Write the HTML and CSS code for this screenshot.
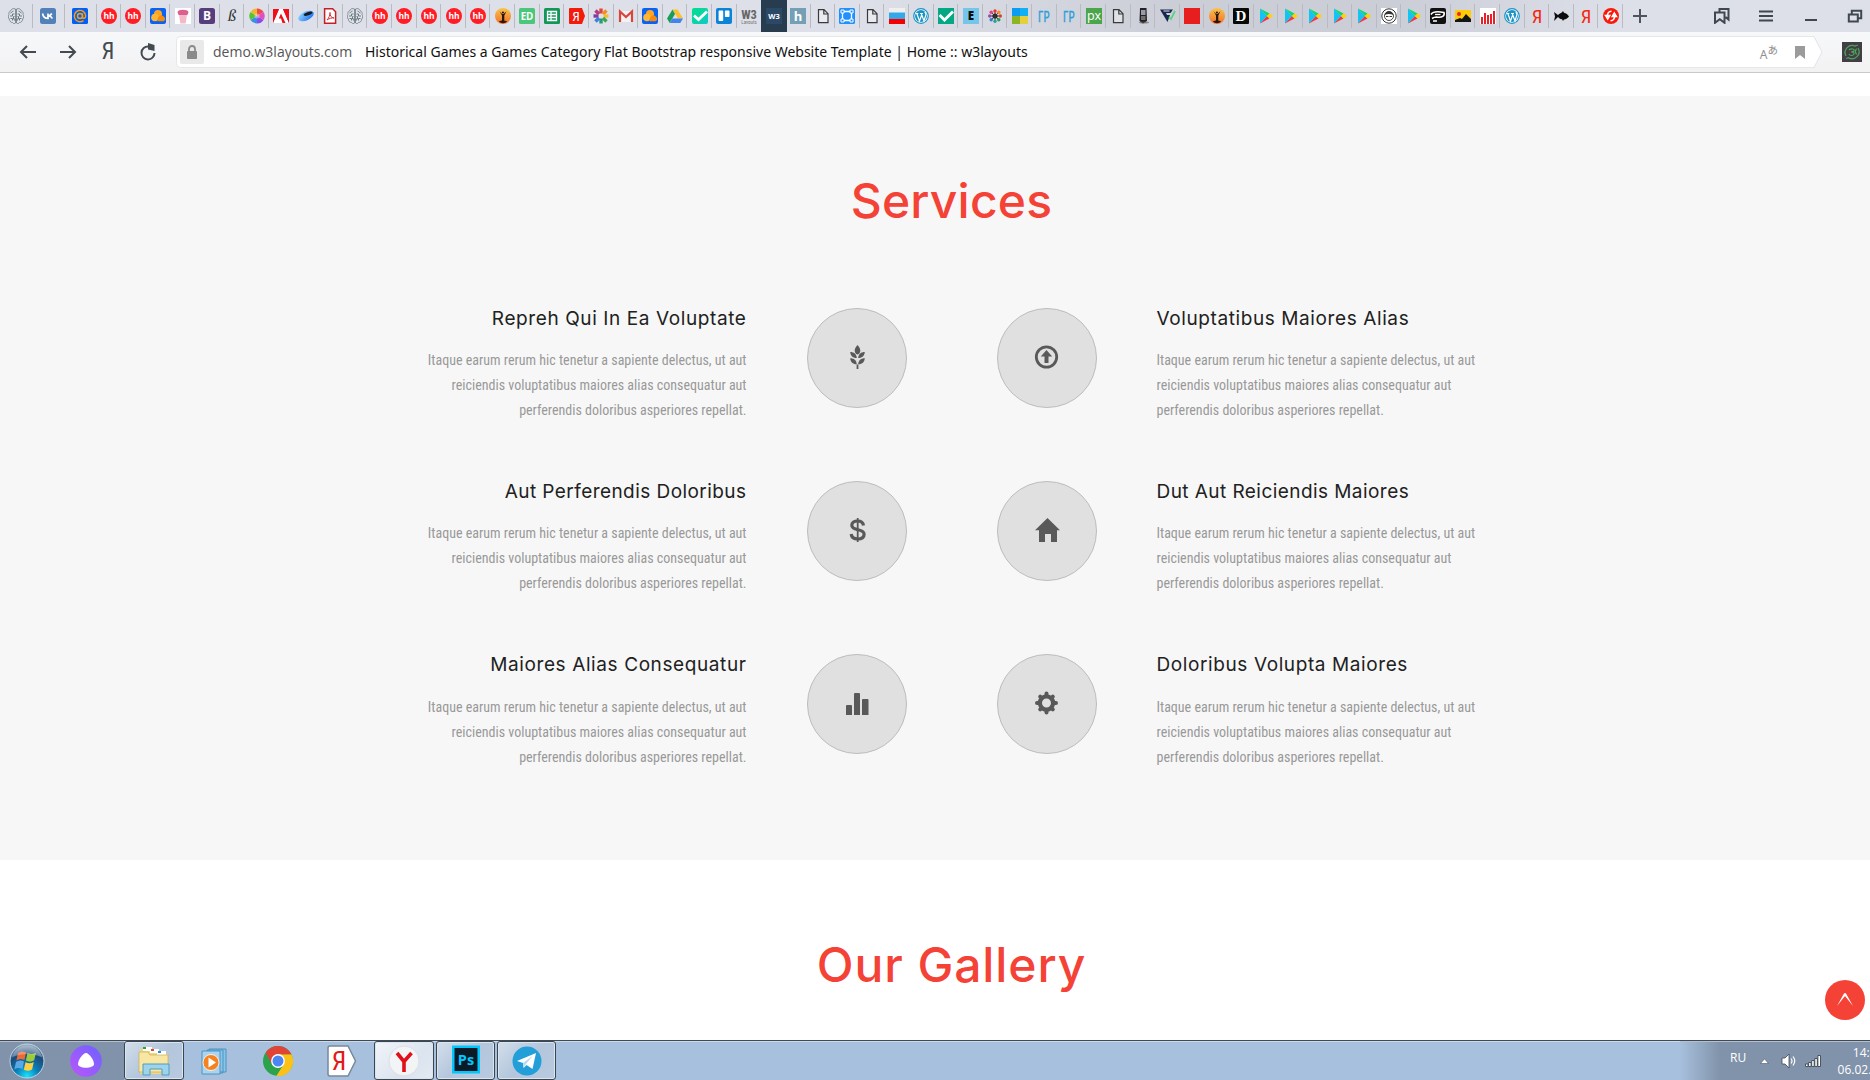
FILE: index.html
```html
<!DOCTYPE html>
<html lang="en">
<head>
<meta charset="utf-8">
<title>Historical Games a Games Category Flat Bootstrap responsive Website Template | Home :: w3layouts</title>
<link rel="stylesheet" href="styles.css">
</head>
<body>
<svg class="defs" aria-hidden="true">
  <defs>
    <linearGradient id="g-sun" x1="0" y1="0" x2="0" y2="1"><stop offset="0" stop-color="#f9c54a"/><stop offset="1" stop-color="#f0702c"/></linearGradient>
    <linearGradient id="g-check" x1="0" y1="0" x2="1" y2="1"><stop offset="0" stop-color="#00e08a"/><stop offset="1" stop-color="#12c8c8"/></linearGradient>
    <linearGradient id="g-disk" x1="0" y1="0" x2="1" y2="1"><stop offset="0" stop-color="#9fdcff"/><stop offset="1" stop-color="#0b67f0"/></linearGradient>
    <linearGradient id="g-alice" x1="1" y1="0" x2="0" y2="1"><stop offset="0" stop-color="#6a63ff"/><stop offset="1" stop-color="#bd55fb"/></linearGradient>
    <radialGradient id="g-orb" cx=".5" cy=".95" r=".95"><stop offset="0" stop-color="#19e4ff"/><stop offset=".35" stop-color="#0b7fb8"/><stop offset=".7" stop-color="#1b4a7a"/><stop offset="1" stop-color="#9fb4c8"/></radialGradient>
  </defs>
</svg>
<svg class="symbols" aria-hidden="true">
  <symbol id="brain" viewBox="0 0 16 16"><path d="M7.500 1C5 0 3.500 1 3 2.500 1 3.500.5 5 1 6.500 0 8 0 10 1.300 11 1.500 13.500 3 14.500 4.500 14.500 5.500 16 7 15.800 7.500 15zM8.500 1C11 0 12.500 1 13 2.500c2 1 2.500 2.500 2 4 1 1.500 1 3.500-.3 4.500-.2 2.500-1.700 3.500-3.200 3.500-1 1.500-2.500 1.300-3 .5z" fill="#dfe4e8" stroke="#6c7983" stroke-width=".8"/><path d="M2.500 5c2 0 1-2 3-2M2 8h2.500V6h2M2.500 10.500h2v2M6.500 8.500H5.500v2.500h1.500v2M13.500 5c-2 0-1-2-3-2M14 8h-2.500V6h-2M13.500 10.500h-2v2M9.500 8.500h1v2.500H9v2" fill="none" stroke="#6c7983"/></symbol>
  <symbol id="vk" viewBox="0 0 16 16"><rect width="16" height="16" rx="2.500" fill="#5181b8"/><path d="M2.500 5.500c.6 3.200 2.300 5 5.500 5v-5M8 8c2 0 3-1 3.800-2.500M8.300 8c2 0 3.300 1 4 2.500" fill="none" stroke="#fff" stroke-width="1.700"/></symbol>
  <symbol id="at" viewBox="0 0 16 16"><rect width="16" height="16" rx="1.500" fill="#005ff9"/><circle cx="8" cy="8" r="2.500" fill="none" stroke="#ff9e00" stroke-width="1.500"/><path d="M10.500 5.500v3.500c0 2 3.200 1.700 3.200-1A5.700 5.700 0 1 0 11.500 12.600" fill="none" stroke="#ff9e00" stroke-width="1.400"/></symbol>
  <symbol id="hh" viewBox="0 0 16 16"><circle cx="8" cy="8" r="8" fill="#ff1c24"/><text x="8" y="11" text-anchor="middle" class="ic b" font-size="8.500" fill="#fff">hh</text></symbol>
  <symbol id="cloud" viewBox="0 0 16 16"><rect width="16" height="16" rx="2" fill="#0a62f5"/><circle cx="8" cy="6" r="4" fill="#ffa51f"/><circle cx="5" cy="9.500" r="3.800" fill="#ffb733"/><path d="M8 13.300c-2-3 3-8 6-4.500 2 2 1 4.500-1 4.500z" fill="#f58a0b"/></symbol>
  <symbol id="cup" viewBox="0 0 16 16"><path fill="#fff" d="M0 0h16v16H0z"/><path d="M4 6h8l-1.300 9.500H5.300z" fill="#f3b9c9"/><path d="M2.500 4C3 1 13 1 13.500 4l-1 3h-9z" fill="#dd5f8c"/></symbol>
  <symbol id="bs" viewBox="0 0 16 16"><rect width="16" height="16" rx="2.500" fill="#563d7c"/><text x="8" y="12.200" text-anchor="middle" class="ic b" font-size="12" fill="#fff">B</text></symbol>
  <symbol id="beta" viewBox="0 0 16 16"><text x="8" y="13" text-anchor="middle" class="serif" font-size="17" fill="#333">ß</text></symbol>
  <symbol id="wheel" viewBox="0 0 16 16"><path d="M8 8V.5A7.500 7.500 0 0 1 14.500 4z" fill="#f04a4a"/><path d="M8 8l6.500-4a7.500 7.500 0 0 1 0 8z" fill="#e44fc0"/><path d="M8 8l6.500 4A7.500 7.500 0 0 1 8 15.500z" fill="#8a4be8"/><path d="M8 8v7.500A7.500 7.500 0 0 1 1.500 12z" fill="#3a8ee8"/><path d="M8 8l-6.500 4a7.500 7.500 0 0 1 0-8z" fill="#56c23a"/><path d="M8 8L1.500 4A7.500 7.500 0 0 1 8 .5z" fill="#f2b52c"/><circle cx="8" cy="8" r="2.500" fill="#fff" opacity=".35"/></symbol>
  <symbol id="adobe" viewBox="0 0 16 16"><path d="M0 1h16v14H0z" fill="#f00e18"/><path d="M0 15L6 1h4l6 14h-3.500L8 5.500 5.800 10.500H8L9.500 15z" fill="#fff"/><path d="M6 1H0v14zM10 1h6v14z" fill="#f00e18"/></symbol>
  <symbol id="disk" viewBox="0 0 16 16"><ellipse cx="8" cy="8" rx="8.300" ry="4.400" transform="rotate(-25 8 8)" fill="url(#g-disk)"/><ellipse cx="10" cy="5.700" rx="4.600" ry="1.600" transform="rotate(-18 10 5.700)" fill="#161b26"/></symbol>
  <symbol id="pdf" viewBox="0 0 16 16"><path d="M2.600.8h8l3 3v11.400h-11z" fill="#fff" stroke="#c61f26" stroke-width="1.500"/><path d="M5 12c2-2 3-5 3-7.500C8 8 9 9.500 12 10c-2-.5-5 .5-7 2z" fill="none" stroke="#d5343a"/></symbol>
  <symbol id="sunset" viewBox="0 0 16 16"><circle cx="8" cy="8" r="8" fill="url(#g-sun)"/><path d="M4.500 3.200L7 6h1.500l3-2.800L9.300 7.500V13H7V7.500zM4 13.500c2-1.200 6-1.200 8 0-2 2.200-6 2.200-8 0z" fill="#2d1508"/><circle cx="7.900" cy="4.500" r="1.100" fill="#2d1508"/></symbol>
  <symbol id="ed" viewBox="0 0 16 16"><rect width="16" height="16" rx="1.500" fill="#4cc77a"/><text x="8" y="11.800" text-anchor="middle" class="ic b" font-size="9.800" fill="#fff">ED</text></symbol>
  <symbol id="sheets" viewBox="0 0 16 16"><rect width="16" height="16" rx="1.500" fill="#12965a"/><path d="M3.500 3.500h9v9h-9zM3.500 6.500h9M3.500 9.500h9M7 3.500v9" fill="none" stroke="#fff" stroke-width="1.300"/></symbol>
  <symbol id="yared" viewBox="0 0 16 16"><path d="M1 0h12l3 8-3 8H1a1 1 0 0 1-1-1V1a1 1 0 0 1 1-1z" fill="#f31b0c"/><text x="7" y="13" text-anchor="middle" class="cond" font-size="13.500" fill="#fff">Я</text></symbol>
  <symbol id="photos" viewBox="0 0 16 16"><g stroke-width="3.400" fill="none"><path d="M8 .5v5" stroke="#e0443e"/><path d="M13.500 2.500l-3.500 3.500" stroke="#f28b30"/><path d="M15.500 8h-5" stroke="#f5bf2a"/><path d="M13.500 13.500l-3.500-3.500" stroke="#3aa757"/><path d="M8 15.500v-5" stroke="#289a75"/><path d="M2.500 13.500l3.500-3.500" stroke="#3b7de0"/><path d="M.5 8h5" stroke="#7b3fa0"/><path d="M2.500 2.500l3.500 3.500" stroke="#b43a78"/></g></symbol>
  <symbol id="gmail" viewBox="0 0 16 16"><path d="M1 3h14v11H1z" fill="#f2f2f2"/><path d="M2 14V3.500l6 5.500 6-5.500V14" fill="none" stroke="#d9453b" stroke-width="2.200"/></symbol>
  <symbol id="drive" viewBox="0 0 16 16"><path d="M5.500 1.500h5L16 10.500h-5z" fill="#fbc02d"/><path d="M5.500 1.500L8 6 2.700 15 0 10.500z" fill="#1a9d57"/><path d="M5.400 10.500H16L13.300 15H2.700z" fill="#4383f0"/></symbol>
  <symbol id="check" viewBox="0 0 16 16"><rect width="16" height="16" rx="2" fill="url(#g-check)"/><path d="M2 7.500l4.500 4L15 3.500" fill="none" stroke="#fff" stroke-width="2.800"/></symbol>
  <symbol id="check2" viewBox="0 0 16 16"><path fill="#04a984" d="M0 0h16v16H0z"/><path d="M1.500 7l5 5L15 3.500" fill="none" stroke="#fff" stroke-width="2.800"/></symbol>
  <symbol id="trello" viewBox="0 0 16 16"><rect width="16" height="16" rx="2" fill="#0b84d8"/><rect x="2.600" y="2.600" width="4.600" height="10.400" rx=".8" fill="#fff"/><rect x="8.900" y="2.600" width="4.600" height="6.500" rx=".8" fill="#fff"/></symbol>
  <symbol id="w3" viewBox="0 0 16 16"><text x="8" y="10.500" text-anchor="middle" class="cond b" font-size="12.500" fill="#666">W3</text><text x="8" y="15.500" text-anchor="middle" class="cond" font-size="5" fill="#777">Layouts</text></symbol>
  <symbol id="w3a" viewBox="0 0 16 16"><path fill="#2c4867" d="M0 0h16v16H0z"/><text x="8" y="11" text-anchor="middle" class="ic b" font-size="7.500" fill="#fff">W3</text></symbol>
  <symbol id="h" viewBox="0 0 16 16"><path fill="#73a0b5" d="M0 0h16v16H0z"/><text x="8" y="13" text-anchor="middle" class="ic b" font-size="13" fill="#fff">h</text></symbol>
  <symbol id="doc" viewBox="0 0 16 16"><path d="M3.500 1.700h5.500l4 4v9H3.500zM8.800 1.700V6H13" fill="#fff" fill-opacity=".35" stroke="#3a3a3a" stroke-width="1.200"/></symbol>
  <symbol id="frame" viewBox="0 0 16 16"><rect width="16" height="16" rx="1.500" fill="#1e90ff"/><path d="M3.500 3.500h9v9h-9z" fill="none" stroke="#fff" stroke-width="1.300"/><path d="M2 2h3v3H2zM11 2h3v3h-3zM2 11h3v3H2zM11 11h3v3h-3z" fill="#1e90ff" stroke="#fff"/></symbol>
  <symbol id="flag" viewBox="0 0 16 16"><path fill="#efefef" d="M0 0h16v5.300H0z"/><path fill="#35a8e8" d="M0 4.500h16v6.500H0z"/><path fill="#f40000" d="M0 11h16v5H0z"/></symbol>
  <symbol id="wp" viewBox="0 0 16 16"><circle cx="8" cy="8" r="7.300" fill="#fff" stroke="#1b93c5" stroke-width="1.200"/><circle cx="8" cy="8" r="6" fill="#1b93c5"/><path d="M2.500 5.500h2.800M7 5.500h3M3.800 5.500l2.700 7.500 2-5.500M8.200 5.500l2.800 7.500L13 6.500c0-1-1-1.500-1-2.800" fill="none" stroke="#fff" stroke-width="1.200"/></symbol>
  <symbol id="e" viewBox="0 0 16 16"><path fill="#73c5ea" d="M0 0h16v16H0z"/><text x="8" y="12.200" text-anchor="middle" class="ic bb" font-size="11.500" fill="#0c0c0c">E</text></symbol>
  <symbol id="flower" viewBox="0 0 16 16"><circle cx="8" cy="8" r="2.600" fill="#222"/><path d="M8 3v10M3 8h10M4.500 4.500l7 7M11.500 4.500l-7 7" stroke="#333" stroke-width=".9"/><circle cx="8" cy="3" r="1.700" fill="#e33"/><circle cx="11.800" cy="4.300" r="1.700" fill="#f58a1f"/><circle cx="13.300" cy="8" r="1.700" fill="#c43"/><circle cx="11.800" cy="11.700" r="1.700" fill="#2a9a55"/><circle cx="8" cy="13.300" r="1.700" fill="#2aa0a0"/><circle cx="4.200" cy="11.700" r="1.700" fill="#3a78c8"/><circle cx="2.700" cy="8" r="1.700" fill="#8c4fb0"/><circle cx="4.200" cy="4.300" r="1.700" fill="#e0447f"/></symbol>
  <symbol id="blocks" viewBox="0 0 16 16"><path fill="#0a9cf0" d="M0 0h8v8H0z"/><path fill="#11b0f5" d="M8 0h8v8H8z"/><path fill="#8db523" d="M0 8h8v8H0z"/><path fill="#e4cf3c" d="M8 8h8v8H8z"/></symbol>
  <symbol id="gr" viewBox="0 0 16 16"><text x="2" y="13.500" textLength="11.500" lengthAdjust="spacingAndGlyphs" class="cond" font-size="15.500" stroke="#2c9fd9" stroke-width=".4" fill="#2c9fd9">ГР</text></symbol>
  <symbol id="px" viewBox="0 0 16 16"><path fill="#4ba54a" d="M0 0h16v16H0z"/><text x="8" y="11.500" text-anchor="middle" class="ic" font-size="12.500" fill="#fff">px</text></symbol>
  <symbol id="phone" viewBox="0 0 16 16"><path d="M5 0h6.500l.5 13-4 2.500L4.500 13z" fill="#222"/><path d="M6 2h4.500v5H6z" fill="#99a"/><path d="M6 9h4.500M6 11h4.500" stroke="#bbb"/><ellipse cx="9" cy="14.500" rx="5" ry="1" fill="#555" opacity=".6"/></symbol>
  <symbol id="ff" viewBox="0 0 16 16"><path d="M0 1.500h13L10.500 5H6l1 2h3L7.500 14z" fill="#16284e"/><path d="M3.500 3h6" stroke="#fff" stroke-width=".9"/><path d="M9 9l2 2 4-8" fill="none" stroke="#58d57a" stroke-width="1.700"/></symbol>
  <symbol id="red" viewBox="0 0 16 16"><path fill="#e81e1e" d="M0 0h16v16H0z"/></symbol>
  <symbol id="d" viewBox="0 0 16 16"><rect width="16" height="16" rx="1" fill="#080808"/><text x="8" y="13.300" text-anchor="middle" class="serif-up" font-size="15" fill="#fff">D</text></symbol>
  <symbol id="play" viewBox="0 0 16 16"><path d="M2 .5v15l7-7.500z" fill="#13c4f2"/><path d="M2 .5L11.500 5.500 9 8z" fill="#12d66f"/><path d="M2 15.500L11.500 10.500 9 8z" fill="#f0384a"/><path d="M11.500 5.500L15 8l-3.500 2.500L9 8z" fill="#ffd200"/></symbol>
  <symbol id="face" viewBox="0 0 16 16"><path fill="#fff" d="M0 0h16v16H0z"/><circle cx="8" cy="8" r="7.200" fill="none" stroke="#333"/><circle cx="8" cy="8" r="4.500" fill="none" stroke="#333" stroke-width=".9"/><path d="M3.600 7c1-5 7.800-5 8.800 0-3-1.500-6-1.500-8.800 0z" fill="#333"/><path d="M5 8.500h2.500M8.500 8.500H11" stroke="#333"/></symbol>
  <symbol id="pp" viewBox="0 0 16 16"><rect width="16" height="16" rx="2" fill="#111"/><path d="M1 6.500c2-3.500 6-3.500 13-2 1 3.500-2 5.500-7.500 4.500-2 0-3 .5-4.500 1.500M3 13h4" fill="none" stroke="#fff" stroke-width="1.600"/><path d="M5 6.500h5.500" stroke="#fff" stroke-width="1.300"/></symbol>
  <symbol id="pic" viewBox="0 0 16 16"><path fill="#ffcc05" d="M0 2h16v12H0z"/><path d="M0 14v-2l5-2 2 1 4-5 5 5v3z" fill="#151515"/><circle cx="4" cy="6" r="2" fill="#e8262b"/></symbol>
  <symbol id="bars" viewBox="0 0 16 16"><path fill="#fff" d="M0 0h16v16H0z"/><path d="M2 9v7M5 5v11M8 7v9M11 6v10M14 3v13" stroke="#e5171d" stroke-width="1.900"/></symbol>
  <symbol id="ya" viewBox="0 0 16 16"><text x="8" y="15" text-anchor="middle" class="cond" font-size="19" fill="#f5260f">Я</text></symbol>
  <symbol id="fish" viewBox="0 0 16 16"><path d="M1 4l4 3c2-2 4-2 5-4l1 1.800C13 5 15 7 16 8.500c-1 1.500-3 3-5 3l-1 1.500-1-1.700C7 11 6 10 5 9l-4 4 1-4.500z" fill="#0d0d0d"/></symbol>
  <symbol id="sync" viewBox="0 0 16 16"><circle cx="8" cy="8" r="8" fill="#f8190b"/><path d="M8.500 3.300C5.500 3.300 4 5.500 4.500 9M2.500 7.500h4.300L4.700 11zM7.500 12.700c3 0 4.500-2.200 4-5.700M13.500 8.500H9.200L11.300 5z" fill="#fff" fill-opacity="0" stroke="#fff" stroke-width="1.500"/></symbol>
</svg>

<div class="screen">
  <header class="browser">
    <div class="tabstrip">
      <div class="pinned">
        <span class="tab"><svg><use href="#brain"/></svg></span>
        <span class="tab"><svg><use href="#vk"/></svg></span>
        <span class="tab"><svg><use href="#at"/></svg></span>
      </div>
      <div class="tabs">
        <span class="tab"><svg><use href="#hh"/></svg></span>
        <span class="tab"><svg><use href="#hh"/></svg></span>
        <span class="tab"><svg><use href="#cloud"/></svg></span>
        <span class="tab"><svg><use href="#cup"/></svg></span>
        <span class="tab"><svg><use href="#bs"/></svg></span>
        <span class="tab"><svg><use href="#beta"/></svg></span>
        <span class="tab"><svg><use href="#wheel"/></svg></span>
        <span class="tab"><svg><use href="#adobe"/></svg></span>
        <span class="tab"><svg><use href="#disk"/></svg></span>
        <span class="tab"><svg><use href="#pdf"/></svg></span>
        <span class="tab"><svg><use href="#brain"/></svg></span>
        <span class="tab"><svg><use href="#hh"/></svg></span>
        <span class="tab"><svg><use href="#hh"/></svg></span>
        <span class="tab"><svg><use href="#hh"/></svg></span>
        <span class="tab"><svg><use href="#hh"/></svg></span>
        <span class="tab"><svg><use href="#hh"/></svg></span>
        <span class="tab"><svg><use href="#sunset"/></svg></span>
        <span class="tab"><svg><use href="#ed"/></svg></span>
        <span class="tab"><svg><use href="#sheets"/></svg></span>
        <span class="tab"><svg><use href="#yared"/></svg></span>
        <span class="tab"><svg><use href="#photos"/></svg></span>
        <span class="tab"><svg><use href="#gmail"/></svg></span>
        <span class="tab"><svg><use href="#cloud"/></svg></span>
        <span class="tab"><svg><use href="#drive"/></svg></span>
        <span class="tab"><svg><use href="#check"/></svg></span>
        <span class="tab"><svg><use href="#trello"/></svg></span>
        <span class="tab tab-last"><svg><use href="#w3"/></svg></span>
        <span class="tab tab-active"><svg><use href="#w3a"/></svg></span>
        <span class="tab"><svg><use href="#h"/></svg></span>
        <span class="tab"><svg><use href="#doc"/></svg></span>
        <span class="tab"><svg><use href="#frame"/></svg></span>
        <span class="tab"><svg><use href="#doc"/></svg></span>
        <span class="tab"><svg><use href="#flag"/></svg></span>
        <span class="tab"><svg><use href="#wp"/></svg></span>
        <span class="tab"><svg><use href="#check2"/></svg></span>
        <span class="tab"><svg><use href="#e"/></svg></span>
        <span class="tab"><svg><use href="#flower"/></svg></span>
        <span class="tab"><svg><use href="#blocks"/></svg></span>
        <span class="tab"><svg><use href="#gr"/></svg></span>
        <span class="tab"><svg><use href="#gr"/></svg></span>
        <span class="tab"><svg><use href="#px"/></svg></span>
        <span class="tab"><svg><use href="#doc"/></svg></span>
        <span class="tab"><svg><use href="#phone"/></svg></span>
        <span class="tab"><svg><use href="#ff"/></svg></span>
        <span class="tab"><svg><use href="#red"/></svg></span>
        <span class="tab"><svg><use href="#sunset"/></svg></span>
        <span class="tab"><svg><use href="#d"/></svg></span>
        <span class="tab"><svg><use href="#play"/></svg></span>
        <span class="tab"><svg><use href="#play"/></svg></span>
        <span class="tab"><svg><use href="#play"/></svg></span>
        <span class="tab"><svg><use href="#play"/></svg></span>
        <span class="tab"><svg><use href="#play"/></svg></span>
        <span class="tab"><svg><use href="#face"/></svg></span>
        <span class="tab"><svg><use href="#play"/></svg></span>
        <span class="tab"><svg><use href="#pp"/></svg></span>
        <span class="tab"><svg><use href="#pic"/></svg></span>
        <span class="tab"><svg><use href="#bars"/></svg></span>
        <span class="tab"><svg><use href="#wp"/></svg></span>
        <span class="tab"><svg><use href="#ya"/></svg></span>
        <span class="tab"><svg><use href="#fish"/></svg></span>
        <span class="tab"><svg><use href="#ya"/></svg></span>
        <span class="tab"><svg><use href="#sync"/></svg></span>
      </div>
      <svg class="new-tab" viewBox="0 0 14 14"><path d="M7 0v14M0 7h14"/></svg>
      <div class="window-controls">
        <svg viewBox="0 0 16 16"><path d="M5.500 4V1h9v10.500l-3-2.500M1 4.500h9.500v10.300L5.800 11.300 1 14.800z"/></svg>
        <svg viewBox="0 0 16 16"><path d="M1 3.500h14M1 8h14M1 12.500h14"/></svg>
        <svg viewBox="0 0 16 16"><path d="M2 12h12"/></svg>
        <svg viewBox="0 0 16 16"><path d="M1.800 6.500h9v7h-9zM4.800 6V2.800h9.400v7.400H11"/></svg>
      </div>
    </div>

    <div class="toolbar">
      <div class="nav">
        <svg viewBox="0 0 18 18"><path d="M17 9H2M8 3L2 9l6 6"/></svg>
        <svg viewBox="0 0 18 18"><path d="M1 9h15M10 3l6 6-6 6"/></svg>
        <span class="nav-ya">Я</span>
        <svg viewBox="0 0 18 18"><path d="M15.500 10A6.500 6.500 0 1 1 9.500 3.500"/><path class="solid" d="M9 0l6.500 2v6L9 6.500z"/></svg>
      </div>
      <div class="omnibox">
        <span class="lock"><svg viewBox="0 0 12 15"><path d="M3 7V4a3 3 0 0 1 6 0v3" fill="none" stroke="#8a8a8a" stroke-width="1.800"/><rect x="1" y="6" width="10" height="8" rx=".8" fill="#8a8a8a"/></svg></span>
        <span class="host">demo.w3layouts.com</span>
        <span class="page-title">Historical Games a Games Category Flat Bootstrap responsive Website Template | Home :: w3layouts</span>
        <span class="translate">A<sup>あ</sup></span>
        <svg class="mark" viewBox="0 0 10 13"><path d="M0 0h10v13L5 9l-5 4z"/></svg>
      </div>
      <svg class="omni-tip" viewBox="0 0 10 32"><path d="M0 .5h1l8 15.500-8 15.500H0"/></svg>
      <svg class="extension" viewBox="0 0 20 20"><path d="M0 0h20v20H0z" fill="#413f45"/><g fill="none" stroke="#4ea65b" stroke-width="1.200"><path d="M4 14a7 7 0 0 1 9.500-9.500M16 6a7 7 0 0 1-9.500 9.700M13 4l3-1M4 16.500l3-1"/><path d="M7 8c2-2 6-1 5 1-1 1-3 1-3 1s4 0 3 2-4 2-5 0M15 7c-2 0-2 5 0 5"/></g></svg>
    </div>
  </header>

  <main class="page">
    <section class="services">
      <h2 class="section-title">Services</h2>
      <div class="service-grid">
        <article class="service service-left">
          <h3>Repreh Qui In Ea Voluptate</h3>
          <p>Itaque earum rerum hic tenetur a sapiente delectus, ut aut reiciendis voluptatibus maiores alias consequatur aut perferendis doloribus asperiores repellat.</p>
        </article>
        <div class="badge"><svg viewBox="0 0 24 24"><path d="M12.500 0c2.200 2.500 3.300 4.500 2.600 7-.5 1.400-1.600 2.300-2.600 2.500-1-.2-2.100-1.100-2.600-2.500C9.200 4.500 10.300 2.500 12.500 0zM5.200 7c3.800 0 6.300 2 6.600 6C8 13.200 5.500 11 5.200 7zM19.800 7c-3.800 0-6.300 2-6.600 6 3.800.2 6.300-2 6.600-6zM5.200 13.300c3.800 0 6.300 2 6.600 6-3.800.2-6.300-2-6.600-6zM19.800 13.300c-3.800 0-6.300 2-6.600 6 3.800.2 6.300-2 6.600-6zM11.600 19.500h1.800V24h-1.800z"/></svg></div>
        <div class="badge"><svg viewBox="0 0 24 24"><circle class="ring" cx="11.500" cy="12" r="10.200"/><path d="M11.500 5l5.700 6.500h-3.700V18h-4v-6.500H5.800z"/></svg></div>
        <article class="service">
          <h3>Voluptatibus Maiores Alias</h3>
          <p>Itaque earum rerum hic tenetur a sapiente delectus, ut aut reiciendis voluptatibus maiores alias consequatur aut perferendis doloribus asperiores repellat.</p>
        </article>

        <article class="service service-left">
          <h3 class="narrow">Aut Perferendis Doloribus</h3>
          <p>Itaque earum rerum hic tenetur a sapiente delectus, ut aut reiciendis voluptatibus maiores alias consequatur aut perferendis doloribus asperiores repellat.</p>
        </article>
        <div class="badge badge-money"><svg viewBox="0 0 24 24"><path class="ring" d="M18.500 7.500C18.100 4.500 15.800 3 12.600 3 9.300 3 6.800 4.600 6.800 7.300c0 6.200 12.300 2.700 12.300 9 0 3-2.600 4.700-6.300 4.700-3.500 0-6.300-1.700-6.600-5"/><path d="M11.800 0h1.800v24h-1.800z"/></svg></div>
        <div class="badge badge-up"><svg viewBox="0 0 24 24"><path d="M12.500 0L25 12.200h-3V24h-6v-8h-6v8H4V12.200H0z"/></svg></div>
        <article class="service">
          <h3 class="narrow">Dut Aut Reiciendis Maiores</h3>
          <p>Itaque earum rerum hic tenetur a sapiente delectus, ut aut reiciendis voluptatibus maiores alias consequatur aut perferendis doloribus asperiores repellat.</p>
        </article>

        <article class="service service-left service-last">
          <h3>Maiores Alias Consequatur</h3>
          <p>Itaque earum rerum hic tenetur a sapiente delectus, ut aut reiciendis voluptatibus maiores alias consequatur aut perferendis doloribus asperiores repellat.</p>
        </article>
        <div class="badge"><svg viewBox="0 0 24 24"><path d="M1 24v-9q0-1 1-1h4q1 0 1 1v9zM9 24V3q0-1 1-1h4q1 0 1 1v21zM17 24V9q0-1 1-1h4.500q1 0 1 1v15z"/></svg></div>
        <div class="badge"><svg viewBox="0 0 24 24"><circle class="gear" cx="11.500" cy="12" r="6.600"/><path class="teeth" d="M11.500 5V2.500M11.500 19v2.500M4.500 12H2M18.500 12H21M6.600 7.100L5.200 5.700M16.400 16.900l1.400 1.400M6.600 16.900l-1.400 1.400M16.400 7.100l1.400-1.400"/></svg></div>
        <article class="service service-last">
          <h3>Doloribus Volupta Maiores</h3>
          <p>Itaque earum rerum hic tenetur a sapiente delectus, ut aut reiciendis voluptatibus maiores alias consequatur aut perferendis doloribus asperiores repellat.</p>
        </article>
      </div>
    </section>
    <section class="gallery">
      <h2 class="section-title gallery-title">Our Gallery</h2>
    </section>
    <a class="to-top" href="#"><svg viewBox="0 0 16 14"><path d="M0 13L7 .5Q8-.5 9 .5L16 13 8 3z"/></svg></a>
  </main>

  <footer class="taskbar">
    <div class="launch">
      <svg class="orb" viewBox="0 0 36 36"><circle cx="18" cy="18" r="17" fill="url(#g-orb)" stroke="#c3d3df"/><path d="M9 10c3-2 5-2 8-.5l-1.600 7.500c-3-1.500-5-1.300-8 .5z" fill="#ee6a35"/><path d="M18.500 10c3 1.500 5.500 1.500 8.500-.2l-1.800 7.500c-3 1.800-5.300 1.700-8.300.3z" fill="#9ccb3b"/><path d="M7 19c3-1.800 5-2 8-.5l-1.700 7.500c-3-1.500-5-1.300-8 .4z" fill="#5aa8e6"/><path d="M16.500 19.200c3 1.500 5.400 1.400 8.300-.3l-1.700 7.500c-3 1.800-5.300 1.700-8.300.3z" fill="#fcd042"/><path d="M3 14A15.500 15.500 0 0 1 33 14Q18 8 3 14z" fill="#fff" opacity=".28"/></svg>
      <svg class="alice" viewBox="0 0 32 32"><circle cx="16" cy="16" r="15.800" fill="url(#g-alice)"/><path d="M16 8c3 0 8 7 8 11 0 5-16 5-16 0 0-4 5-11 8-11z" fill="#fff"/></svg>
    </div>
    <div class="apps">
      <span class="app app-open"><svg viewBox="0 0 32 32"><path d="M2 4h8l2 2h4l2 1h5l1 2h6v20H2z" fill="#efd78a"/><path d="M5 2h9v4H5zM12 4h9v4h-9zM19 6h9v4h-9z" fill="#fff"/><path d="M5 2h3v2H5z" fill="#2ca53a"/><path d="M13 4h3v2h-3z" fill="#e0442e"/><path d="M20 6h3v2h-3z" fill="#2a8bd0"/><path d="M1 7h9l2 3h18v17H1z" fill="#f7e7a3" stroke="#cfae51" stroke-width=".7"/><path d="M5 30V19h26v11h-7v-6H12v6z" fill="#9ed3ec" stroke="#4d9cc4"/></svg></span>
      <span class="app"><svg viewBox="0 0 32 32"><path d="M10 4h17v23H10zM8 5h16v23H8z" fill="#8cc4e8" stroke="#4b94c4"/><path d="M3 6h18v23H3z" fill="#a9d3ee" stroke="#4b94c4"/><circle cx="12" cy="17.500" r="8" fill="#f58220" stroke="#fff" stroke-width=".8"/><path d="M9.500 12.500v10l7.500-5z" fill="#fff"/></svg></span>
      <span class="app"><svg viewBox="0 0 32 32"><circle cx="16" cy="16" r="15" fill="#2ba24c"/><path d="M16 16h15a15 15 0 0 1-16.500 15l7.500-12z" fill="#fbc116"/><path d="M16 9.200h13.400A15 15 0 0 1 14.500 31l7.400-11.500z" fill="#fbc116"/><path d="M3.700 7.500A15 15 0 0 1 29.400 9.200H16L10 19.500z" fill="#e04437"/><circle cx="16" cy="16" r="6.900" fill="#fff"/><circle cx="16" cy="16" r="5.500" fill="#4b86f2"/></svg></span>
      <span class="app"><svg viewBox="0 0 32 32"><path d="M4 1h18l7.500 15L22 31H4q-2 0-2-2V3q0-2 2-2z" fill="#fff" stroke="#79889b" stroke-width="1.500"/><text x="13" y="25" text-anchor="middle" class="cond" font-size="26" fill="#e21a1a">Я</text></svg></span>
      <span class="app app-open app-front"><svg viewBox="0 0 32 32"><circle cx="16" cy="16" r="15" fill="#f3f4f6" stroke="#dcdfe4"/><path d="M9 8l7 8.500V27M23.500 8L16 16.500" fill="none" stroke="#e0101a" stroke-width="3.600"/></svg></span>
      <span class="app app-open"><svg viewBox="0 0 32 32"><path d="M2 .5h28v28H2z" fill="#00c8ff"/><path d="M4.500 3h23v23h-23z" fill="#0a1a26"/><text x="16" y="20" text-anchor="middle" class="ic b" font-size="14.500" fill="#00c8ff">Ps</text></svg></span>
      <span class="app app-open"><svg viewBox="0 0 32 32"><circle cx="16" cy="16" r="14.500" fill="#229fd8"/><path d="M6 16l19-8-3.500 16-6-4-3 3-.5-5z" fill="#fff"/><path d="M12 18l10-7.500-7 8.500-2.500 3.500z" fill="#b8dcee"/></svg></span>
    </div>
    <div class="tray">
      <span class="lang">RU</span>
      <svg class="arrow" viewBox="0 0 9 6"><path d="M.5 5.500h8L4.500.8z"/></svg>
      <svg class="sound" viewBox="0 0 16 16"><path d="M1 5h3l4-4v14l-4-4H1z" fill="#fff" stroke="#3d4752" stroke-width=".8"/><path d="M10 5.500q2 2.500 0 5M12 3.500q3.500 4.500 0 9" fill="none" stroke="#fff" stroke-width="1.200"/></svg>
      <svg class="signal" viewBox="0 0 16 12"><path d="M.5 9h2.500v2.500H.5zM3.600 7.500h2.500v4H3.600zM6.700 5.500h2.500v6H6.700zM9.800 3.500h2.500v8H9.800zM12.900.5h2.600v11h-2.600z"/></svg>
      <span class="clock"><span>14:42</span><span>06.02.2020</span></span>
    </div>
  </footer>
</div>
</body>
</html>
```
FILE: styles.css
```css
* { box-sizing: border-box; }

body {
  margin: 0;
  overflow: hidden;
  font-family: "Noto Sans", "Noto Sans CJK JP", sans-serif;
}

svg { display: block; flex: none; }
.defs { position: absolute; width: 0; height: 0; }
.symbols { display: none; }

/* lettering inside icons */
.ic { font-family: "Open Sans", sans-serif; }
.b { font-weight: 700; }
.bb { font-weight: 800; }
.cond { font-family: Roboto, sans-serif; font-stretch: 75%; }
.serif { font-family: "Liberation Serif", serif; font-style: italic; }
.serif-up { font-family: "Liberation Serif", serif; font-weight: 700; }

.screen {
  width: 1870px;
  height: 1080px;
  display: flex;
  flex-direction: column;
  overflow: hidden;
}

/* browser chrome */
.browser {
  flex: none;
  height: 73px;
  border-bottom: 1px solid #c9c9c9;
}

.tabstrip {
  display: flex;
  align-items: center;
  height: 32px;
  background: linear-gradient(90deg, #dde0e8 0, #dde0e8 860px, #cbced6 1180px, #cbced6 1400px, #dde0e8 1620px);
}

.pinned { display: grid; grid-template-columns: repeat(3, 32px); margin-right: .5px; }
.tabs { display: grid; grid-template-columns: repeat(62, 1fr); width: 1526.5px; }

.tab {
  position: relative;
  display: flex;
  align-items: center;
  justify-content: center;
  height: 32px;
}
.tab > svg { width: 16px; height: 16px; }
.tab::after {
  content: "";
  position: absolute;
  right: 0;
  top: 4px;
  width: 1px;
  height: 24px;
  background: #b9bbc1;
}
.pinned .tab::after { right: -1px; }
.tab-last::after, .tab-active::after { display: none; }
.tab-active { background: #283c50; margin-right: -1px; }

.new-tab { width: 14px; height: 14px; margin-left: 10px; }
.new-tab path { fill: none; stroke: #4c545c; stroke-width: 2; }

.window-controls { display: flex; gap: 28.3px; margin-left: 67px; }
.window-controls svg { width: 16px; height: 16px; }
.window-controls path { fill: none; stroke: #3f4850; stroke-width: 2; }

.toolbar {
  display: flex;
  align-items: center;
  height: 40px;
  background: linear-gradient(#f7f8fa, #f2f2f3);
}

.nav { display: flex; align-items: center; width: 176px; padding-left: 19px; gap: 22px; }
.nav svg { width: 18px; height: 18px; }
.nav path { fill: none; stroke: #434a50; stroke-width: 2; }
.nav path.solid { fill: #434a50; stroke: none; }
.nav-ya {
  width: 18px;
  text-align: center;
  font: 23px/24px Roboto, sans-serif;
  font-stretch: 75%;
  color: #434a50;
}

.omnibox {
  display: flex;
  align-items: center;
  width: 1637px;
  height: 32px;
  padding-left: 3px;
  border: 1px solid #e6e7e9;
  border-right: 0;
  border-radius: 5px 0 0 5px;
  background: #fff;
  font-size: 14px;
  line-height: 20px;
  white-space: nowrap;
}
.lock {
  display: grid;
  place-items: center;
  width: 24px;
  height: 24px;
  border-radius: 2px;
  background: #e9e9e9;
}
.lock svg { width: 12px; height: 15px; }
.host { width: 140px; margin-left: 9px; font-family: "Open Sans", sans-serif; color: #555; }
.page-title { margin-left: 12px; color: #111; }
.translate { margin-left: auto; padding-top: 5px; font-size: 12px; line-height: 20px; color: #8f8f8f; }
.translate sup { font-size: 10.5px; line-height: 0; vertical-align: 5px; }
.mark { width: 10px; height: 13px; margin: 0 8px 0 17px; }
.mark path { fill: #9b9b9b; }
.omni-tip { width: 10px; height: 32px; }
.omni-tip path { fill: #fff; stroke: #e2e3e5; }
.extension { width: 20px; height: 20px; margin-left: 19px; }

/* web page: slightly wider than the visible window */
.page {
  position: relative;
  flex: none;
  width: 1903px;
  height: 967px;
  padding-top: 23px;
  background: #fff;
}

.services { height: 764px; padding-top: 75px; background: #f7f7f7; }
.gallery { padding-top: 75px; }

.section-title {
  margin: 0;
  font: 480 48px/60px Inter, sans-serif;
  letter-spacing: .2px;
  text-align: center;
  color: #f44336;
}
.gallery-title { letter-spacing: .9px; }

.service-grid {
  display: grid;
  grid-template-columns: 380px 145px 145px 380px;
  row-gap: 58px;
  width: 1050px;
  margin: 77px auto 0;
}

.service { height: 115px; padding: 1px 0 0 60px; }
.service-left { padding: 1px 60px 0 0; text-align: right; }
.service h3 {
  margin: 0;
  font: 430 19px/20px Inter, sans-serif;
  letter-spacing: .6px;
  white-space: nowrap;
  color: #212121;
}
.service h3.narrow { letter-spacing: .44px; }
.service p {
  margin: 19px 0 0;
  font: 14px/25px Roboto, sans-serif;
  font-stretch: 75%;
  color: #999;
}
.service-last p { margin-top: 20px; }

.badge {
  display: grid;
  place-items: center;
  width: 100px;
  height: 100px;
  padding-bottom: 2px;
  border: 1px solid #bdbdbd;
  border-radius: 50%;
  background: #e0e0e0;
}
.badge + .badge { margin-left: 45px; }
.badge-up { padding-bottom: 3px; }
.badge-money { padding-bottom: 3px; }
.badge svg { width: 24px; height: 24px; overflow: visible; fill: #595959; }
.badge .ring { fill: none; stroke: #595959; stroke-width: 2.8; }
.badge-money .ring { stroke-width: 3.2; }
.badge .gear { fill: none; stroke: #595959; stroke-width: 4.2; }
.badge .teeth { fill: none; stroke: #595959; stroke-width: 4; stroke-linecap: round; }

.to-top {
  position: absolute;
  left: 1825px;
  top: 907px;
  display: grid;
  place-items: center;
  width: 40px;
  height: 40px;
  border-radius: 50%;
  background: #f44336;
}
.to-top svg { width: 16px; height: 14px; fill: #fff; }

/* desktop taskbar */
.taskbar {
  flex: none;
  display: flex;
  height: 40px;
  border-top: 1px solid #3f4a56;
  background: #a7c0dd;
  box-shadow: inset 0 1px #cbd9e8;
}
.launch {
  display: flex;
  align-items: center;
  width: 124px;
  padding-left: 8.5px;
  background: #8193aa;
  box-shadow: inset 0 1px #b4c0ce;
}
.orb { width: 36px; height: 36px; }
.alice { width: 32px; height: 32px; margin-left: 25.5px; }

.apps { display: grid; grid-template-columns: 60px 60px 64px 62px 60px 60px 60px; column-gap: 1px; }
.app { display: grid; place-items: center; height: 39px; }
.app svg { width: 32px; height: 32px; }
.app-open {
  border: 1px solid #3c4651;
  border-radius: 3px;
  background: linear-gradient(135deg, #d3deea, #b3c6dc 50%, #b9cadf);
  box-shadow: inset 0 0 0 1px #dbe5f0;
}
.app-front { background: linear-gradient(135deg, #f2f5f9, #dbe4ef 60%, #e2eaf3); }
.app-open + .app-open { margin-left: 1px; }

.tray {
  display: flex;
  align-items: center;
  flex: none;
  width: 190px;
  margin-left: auto;
  padding-left: 50px;
  background: linear-gradient(90deg, #a7c0dd, #8193aa 40px);
  box-shadow: inset 0 1px #b4c0ce;
  color: #fff;
  font: 12px/17px "Open Sans", sans-serif;
}
.lang { width: 17px; margin-top: -6px; font-size: 12px; }
.arrow { width: 9px; height: 6px; margin-left: 14px; fill: #fff; stroke: #4c5866; stroke-width: .6; }
.sound { width: 16px; height: 16px; margin-left: 12px; }
.signal { width: 16px; height: 12px; margin-left: 8px; fill: #fff; stroke: #3d4752; stroke-width: .9; }
.clock {
  display: flex;
  flex-direction: column;
  align-items: center;
  flex: none;
  width: 60px;
  margin-left: 17px;
  font-size: 12px;
}
```
